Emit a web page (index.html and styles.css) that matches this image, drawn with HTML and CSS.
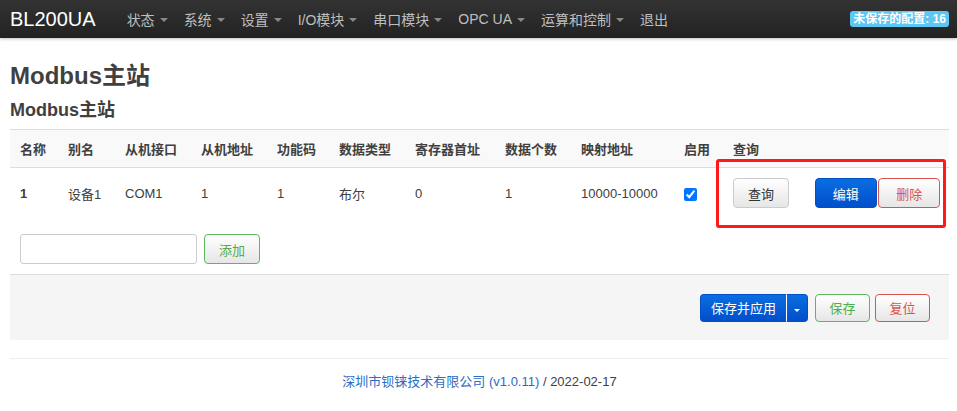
FILE: index.html
```
<!DOCTYPE html>
<html lang="zh-CN">
<head>
    <meta charset="UTF-8">
    <meta name="viewport" content="width=device-width, initial-scale=1.0">
    <title>Modbus主站</title>
    <link rel="stylesheet" href="styles.css">
</head>
<body>

    <header class="navbar">
        <a class="brand" href="#">BL200UA</a>
        <ul class="nav">
            <li>状态<span class="caret"></span></li>
            <li>系统<span class="caret"></span></li>
            <li>设置<span class="caret"></span></li>
            <li>I/O模块<span class="caret"></span></li>
            <li>串口模块<span class="caret"></span></li>
            <li>OPC UA<span class="caret"></span></li>
            <li>运算和控制<span class="caret"></span></li>
            <li>退出</li>
        </ul>
        <span class="badge">未保存的配置: 16</span>
    </header>

    <div class="main">
        <h2>Modbus主站</h2>
        <h3>Modbus主站</h3>

        <table class="cbi-table">
            <colgroup>
                <col style="width:48px"><col style="width:57px"><col style="width:76px"><col style="width:76px">
                <col style="width:62px"><col style="width:76px"><col style="width:90px"><col style="width:76px">
                <col style="width:103px"><col style="width:49px"><col style="width:226px">
            </colgroup>
            <thead>
                <tr>
                    <th>名称</th>
                    <th>别名</th>
                    <th>从机接口</th>
                    <th>从机地址</th>
                    <th>功能码</th>
                    <th>数据类型</th>
                    <th>寄存器首址</th>
                    <th>数据个数</th>
                    <th>映射地址</th>
                    <th>启用</th>
                    <th>查询</th>
                </tr>
            </thead>
            <tbody>
                <tr>
                    <td class="name">1</td>
                    <td>设备1</td>
                    <td>COM1</td>
                    <td>1</td>
                    <td>1</td>
                    <td>布尔</td>
                    <td>0</td>
                    <td>1</td>
                    <td>10000-10000</td>
                    <td><input type="checkbox" checked></td>
                    <td class="actions">
                        <button class="btn">查询</button>
                        <span class="row-buttons">
                            <button class="btn btn-primary">编辑</button>
                            <button class="btn btn-remove">删除</button>
                        </span>
                    </td>
                </tr>
            </tbody>
        </table>

        <div class="add-row">
            <input type="text" class="add-input">
            <button class="btn btn-add">添加</button>
        </div>

        <div class="page-actions">
            <div class="btn-group">
                <button class="btn btn-primary apply">保存并应用</button><button class="btn btn-primary split"><span class="caret caret-white"></span></button>
            </div>
            <button class="btn btn-add">保存</button>
            <button class="btn btn-remove">复位</button>
        </div>

        <footer class="footer">
            <a href="#">深圳市钡铼技术有限公司 (v1.0.11)</a> / 2022-02-17
        </footer>

        <!-- highlight box around row actions -->
        <div class="highlight"></div>
    </div>

</body>
</html>
```

FILE: styles.css
```
body {
    margin: 0;
    font-family: 'Liberation Sans', 'Noto Sans CJK SC', sans-serif;
    font-size: 13px;
    color: #404040;
    background: #fff;
}
.navbar {
    display: flex;
    align-items: center;
    height: 38px;
    padding: 0 8px 0 10px;
    background: linear-gradient(#333, #222);
    box-shadow: 0 1px 3px rgba(0, 0, 0, 0.25);
}
.brand {
    color: #fff;
    font-size: 20px;
    text-decoration: none;
    margin-right: 31px;
}
.nav {
    display: flex;
    list-style: none;
    margin: 0;
    padding: 0;
    gap: 16px;
    flex: 1;
}
.nav li {
    color: #bfbfbf;
    font-size: 14px;
    display: flex;
    align-items: center;
}
.caret {
    display: inline-block;
    width: 0;
    height: 0;
    margin-left: 5px;
    margin-top: 2px;
    border-left: 4px solid transparent;
    border-right: 4px solid transparent;
    border-top: 4px solid #888;
}
.caret-white {
    border-left-width: 3px;
    border-right-width: 3px;
    border-top: 3px solid #fff;
    margin: 0;
}
.badge {
    background: #5bc7f2;
    color: #fff;
    font-weight: bold;
    font-size: 12px;
    padding: 1px 3px;
    border-radius: 3px;
    line-height: 14px;
}
.main {
    position: relative;
    padding: 0 8px 0 10px;
}
h2 {
    font-size: 24px;
    margin: 0;
    padding-top: 20px;
    line-height: 36px;
    color: #404040;
}
h3 {
    font-size: 18px;
    margin: 2px 0 0;
    line-height: 28px;
}
.cbi-table {
    width: 939px;
    table-layout: fixed;
    border-collapse: collapse;
    margin-top: 5px;
}
.cbi-table th {
    text-align: left;
    font-weight: bold;
    background: #f9f9f9;
    border-top: 1px solid #ddd;
    border-bottom: 1px solid #ddd;
    height: 37px;
    padding: 0 0 0 10px;
}
.cbi-table td {
    padding: 10px 0 10px 10px;
    height: 30px;
    vertical-align: middle;
}
.cbi-table td.name {
    font-weight: bold;
}
.cbi-table input[type=checkbox] {
    margin: 0;
    width: 13px;
    height: 13px;
    vertical-align: middle;
}
.actions {
    white-space: nowrap;
}
.row-buttons {
    margin-left: 22px;
}
.btn {
    font-family: inherit;
    font-size: 13px;
    height: 30px;
    padding: 0 14px;
    color: #333;
    background: linear-gradient(#fff, #e6e6e6);
    border: 1px solid #ccc;
    border-radius: 4px;
    cursor: pointer;
    vertical-align: middle;
}
.btn-primary {
    color: #fff;
    background: linear-gradient(#0a6ee0, #004fcb);
    border-color: #0050c8;
    padding: 0 17px;
}
.btn-remove {
    color: #d9534f;
    border-color: #d9534f;
    padding: 0 17px;
}
.btn-add {
    color: #4cae4c;
    border-color: #5cb85c;
    padding: 0 14px;
}
.row-buttons .btn + .btn {
    margin-left: -2px;
}
.add-row {
    display: flex;
    gap: 7px;
    padding: 16px 10px 10px;
}
.add-input {
    width: 177px;
    height: 30px;
    box-sizing: border-box;
    border: 1px solid #ccc;
    border-radius: 3px;
    margin: 0;
}
.page-actions {
    display: flex;
    justify-content: flex-end;
    align-items: center;
    gap: 5px;
    background: #f5f5f5;
    border-top: 1px solid #ddd;
    height: 65px;
    padding-right: 19px;
    width: 920px;
}
.page-actions .btn {
    height: 28px;
    padding: 0 13.5px;
}
.btn-group {
    display: flex;
    margin-right: 2px;
}
.page-actions .btn-group .apply {
    padding: 0 10px;
    border-radius: 4px 0 0 4px;
    border-right: 1px solid #fff;
}
.page-actions .btn-group .split {
    padding: 0 7px;
    border-radius: 0 4px 4px 0;
    border-left: none;
}
.footer {
    margin-top: 18px;
    border-top: 1px solid #eee;
    width: 939px;
    text-align: center;
    padding-top: 14px;
    line-height: 18px;
}
.footer a {
    color: #2b6cc4;
    text-decoration: none;
}
.highlight {
    position: absolute;
    left: 716px;
    top: 121px;
    width: 224px;
    height: 63px;
    border: 3px solid #ff1a1a;
    border-radius: 3px;
}
```
